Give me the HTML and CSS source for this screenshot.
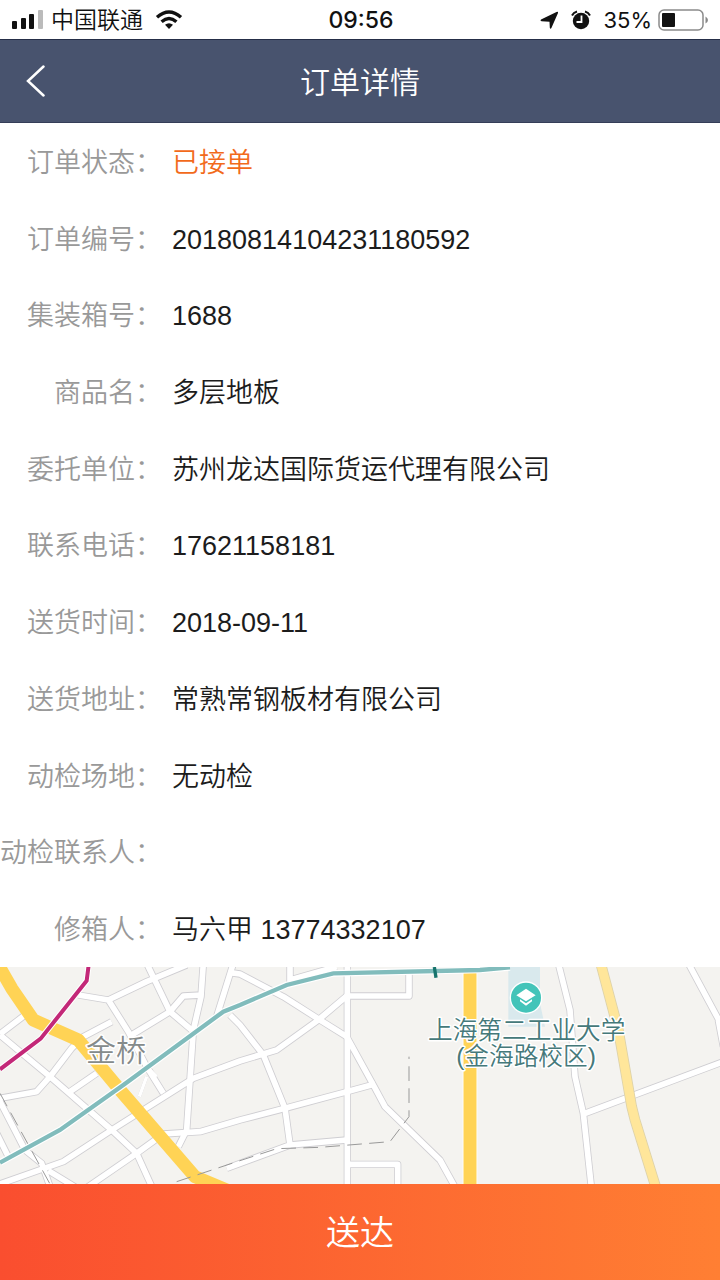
FILE: index.html
```html
<!DOCTYPE html>
<html lang="zh-CN">
<head>
<meta charset="utf-8">
<meta name="viewport" content="width=device-width, initial-scale=1">
<title>订单详情</title>
<link rel="stylesheet" href="styles.css">
</head>
<body class="screen">
<div class="status">
  <div class="status-left">
    <svg class="signal" width="32" height="20" viewBox="0 0 32 20" aria-hidden="true">
      <rect x="0" y="11" width="5" height="8" rx="1"/><rect x="9" y="8" width="5" height="11" rx="1"/><rect x="17" y="4" width="5" height="15" rx="1"/><rect x="26" y="0" width="5" height="19" rx="1" fill="#bbb"/>
    </svg>
    <span class="carrier">中国联通</span>
    <svg class="wifi" width="28" height="20" viewBox="0 0 28 20" aria-hidden="true">
      <path d="M2 7.2Q14-3.4 26 7.2M6.6 11.8Q14 5.4 21.4 11.8" fill="none" stroke="#111" stroke-width="3.4"/>
      <path d="M10 14.8Q14 11.6 18 14.8L14 19Z" fill="#111"/>
    </svg>
  </div>
  <time class="clock">09:56</time>
  <div class="status-right">
    <svg width="20" height="20" viewBox="0 0 20 20" aria-hidden="true"><path d="M19 3 12.500 17.800Q11.500 19.500 10.800 17.800L10.500 11.800 2.500 11.300Q.6 10.800 2 9.500L17.500 2Q19.300 1.200 19 3Z"/></svg>
    <svg width="20" height="20" viewBox="0 0 20 20" aria-hidden="true"><circle cx="10" cy="11" r="8.200"/><path d="M1 5.500Q2.500 2.500 6 1.500M19 5.500Q17.500 2.500 14 1.500" fill="none" stroke="#111" stroke-width="2"/><path d="M10.500 5.500V12H5.500" fill="none" stroke="#fff" stroke-width="1.800"/></svg>
    <span class="percent">35%</span>
    <svg class="battery" width="52" height="22" viewBox="0 0 52 22" aria-hidden="true"><rect x="1" y="1" width="44" height="20" rx="5" fill="#fff" stroke="#8b8b8b" stroke-width="1.500"/><rect x="4" y="4" width="13" height="14" rx="1"/><path d="M47.500 7.500Q50 9 50 11T47.500 14.500Z" fill="#888"/></svg>
  </div>
</div>
<header class="nav">
  <button class="back" type="button" aria-label="返回"><svg width="20" height="32" viewBox="0 0 20 32" aria-hidden="true"><path d="M17.500 1.500 2 16 17.500 30.500" fill="none" stroke="#fff" stroke-width="2.500" stroke-linecap="round"/></svg></button>
  <h1 class="title">订单详情</h1>
</header>
<dl class="details">
  <div class="row"><dt>订单状态：</dt><dd class="accent">已接单</dd></div>
  <div class="row"><dt>订单编号：</dt><dd>20180814104231180592</dd></div>
  <div class="row"><dt>集装箱号：</dt><dd>1688</dd></div>
  <div class="row"><dt>商品名：</dt><dd>多层地板</dd></div>
  <div class="row"><dt>委托单位：</dt><dd>苏州龙达国际货运代理有限公司</dd></div>
  <div class="row"><dt>联系电话：</dt><dd>17621158181</dd></div>
  <div class="row"><dt>送货时间：</dt><dd>2018-09-11</dd></div>
  <div class="row"><dt>送货地址：</dt><dd>常熟常钢板材有限公司</dd></div>
  <div class="row"><dt>动检场地：</dt><dd>无动检</dd></div>
  <div class="row"><dt>动检联系人：</dt><dd></dd></div>
  <div class="row"><dt>修箱人：</dt><dd>马六甲 13774332107</dd></div>
</dl>
<svg class="map" viewBox="0 21 2160 651" preserveAspectRatio="xMidYMid slice" role="img" aria-label="地图">
  <defs>
    <g id="roads">
      <path d="M0 222 75 165M0 225 150 350 335 510 410 580 460 690M0 415 110 395 150 350 215 265 250 230 335 185"/>
      <path d="M235 105 325 120 440 65 560 15M325 120 385 215 440 320 490 400M440 10 510 155 575 210"/>
      <path d="M395 225 510 155 550 108 605 105M610 10 603 110 580 210 560 510 535 560M700 10 650 170M210 395 290 340"/>
      <path d="M690 38 720 42 850 110 960 180 1040 230 1120 375 1155 440 1320 600 1370 690"/>
      <path d="M0 672 190 605 335 510 580 355 720 303 830 270 955 180 1040 108H1227V35"/>
      <path d="M250 690 410 580 490 522 600 515 720 480 855 445 1040 395 1125 372"/>
      <path d="M-5 415 75 570 125 610 150 680M145 632 240 690M-10 520 25 590M690 165 720 195 790 285 855 445 870 555M680 625 870 555 1040 540"/>
      <path d="M1042 10V690M1042 613H1193V690M870 10V70M870 60 1010 20"/>
      <path d="M1675 10 1710 150 1725 350 1750 460 1775 690M1750 462 2170 305M2065 10 2170 205M2155 180 2170 260"/>
      <path d="M440 350 418 410M470 350 440 320" stroke-width="10"/>
    </g>
  </defs>
  <rect y="0" width="2160" height="700" fill="#f4f3f0"/>
  <path d="M1525 21H1620V130L1635 200H1525Z" fill="#d9e9ed"/>
  <use href="#roads" class="road-edge"/>
  <use href="#roads" class="road"/>
  <path class="light-edge" d="M1802 10 1855 210 1895 440 1905 480 1970 690"/>
  <path class="light-road" d="M1802 10 1855 210 1895 440 1905 480 1970 690"/>
  <path d="M1410 35V690" fill="none" stroke="#fff" stroke-width="44"/>
  <path d="M1410 35V690M-5 15 35 85 100 180 235 240 360 390 585 650 680 690" fill="none" stroke="#ffd355" stroke-width="39" stroke-linejoin="round"/>
  <path class="rail" d="M0 400 150 672M530 665 720 602 830 566 960 562 1170 545 1227 470V290"/>
  <path d="M0 608 180 510 370 375 670 155 720 135 860 75 1000 40 1440 30 1530 22" fill="none" stroke="#fff" stroke-width="20"/>
  <path d="M0 608 180 510 370 375 670 155 720 135 860 75 1000 40 1440 30 1530 22" fill="none" stroke="#81bcbc" stroke-width="13"/>
  <path d="M0 328 122 236 260 62 266 15" fill="none" stroke="#fff" stroke-width="18"/>
  <path d="M0 328 122 236 260 62 266 15" fill="none" stroke="#c32878" stroke-width="12"/>
  <path d="M1303 21 1308 53" stroke="#17746d" stroke-width="10"/>
  <circle cx="1578" cy="113" r="49" fill="#fff"/><circle cx="1578" cy="113" r="45" fill="#43c4b9"/>
  <path d="M1578 86 1607 106 1578 124 1549 106ZM1560 118 1578 130 1596 118V124L1578 137 1560 124Z" fill="#fff"/>
  <g class="map-text">
    <text class="district" x="348" y="304">金桥</text>
    <text class="place" x="1580" y="236">上海第二工业大学</text>
    <text class="place" x="1578" y="315">(金海路校区)</text>
  </g>
</svg>
<button class="deliver" type="button">送达</button>
</body>
</html>
```
FILE: styles.css
```css
* { box-sizing: border-box; }

.screen {
  display: flex;
  flex-direction: column;
  min-height: 100vh;
  margin: 0;
  background: #fff;
  color: #1c1c1c;
  font-family: "Liberation Sans", "Noto Sans CJK SC", sans-serif;
  font-weight: 350;
}

.status {
  display: grid;
  grid-template-columns: 1fr auto 1fr;
  align-items: center;
  height: 39px;
  padding: 0 10px 0 12px;
  color: #111;
  fill: #111;
}

.status-left,
.status-right {
  display: flex;
  align-items: center;
}

.status-right { justify-content: flex-end; gap: 12px; }
.carrier { margin: 0 12px 0 7px; font-size: 23px; line-height: 32px; }
.clock { font-family: Inter, sans-serif; font-size: 23px; font-weight: 500; }
.percent { font-family: Inter, sans-serif; font-size: 22px; font-weight: 400; }
.battery { margin-left: -6px; }

.nav {
  display: grid;
  grid-template-columns: 72px 1fr 72px;
  align-items: center;
  height: 84px;
  border-top: 1px solid #252e48;
  border-bottom: 1px solid #353e58;
  background: #48536e;
  color: #fff;
}

.back {
  display: flex;
  padding: 12px 26px;
  border: 0;
  background: none;
}

.title {
  margin: 0;
  padding-top: 3px;
  font-size: 30px;
  font-weight: 350;
  line-height: 40px;
  text-align: center;
}

.details {
  display: grid;
  flex: 1;
  grid-auto-rows: 1fr;
  margin: 0;
  font-size: 27px;
  line-height: 40px;
}

.row {
  display: grid;
  grid-template-columns: 162px 1fr;
  gap: 10px;
  align-items: center;
  padding-top: 3px;
}

.row dt { color: #999; text-align: right; white-space: nowrap; }
.row dd { margin: 0; }
.row .accent { color: #f26a1b; }

.map { display: block; width: 100%; height: 217px; }
.road-edge, .road, .light-edge, .light-road { fill: none; stroke-linejoin: round; }
.road-edge { stroke: #cfced2; stroke-width: 22px; }
.road { stroke: #fff; stroke-width: 17px; }
.light-edge { stroke: #ddd2aa; stroke-width: 32px; }
.light-road { stroke: #ffe69a; stroke-width: 27px; }
.rail { fill: none; stroke: #999; stroke-width: 3px; stroke-dasharray: 44px 22px; }

.map-text {
  text-anchor: middle;
  stroke: #fff;
  stroke-width: 9px;
  stroke-linejoin: round;
  paint-order: stroke;
}

.district { font-size: 90px; fill: #858b8b; }
.place { font-size: 74px; fill: #45797a; }

.deliver {
  height: 96px;
  padding: 0 0 4px;
  border: 0;
  background: linear-gradient(90deg, #fa4e2f, #ff7f33);
  color: #fff;
  font: inherit;
  font-size: 34px;
}
```
